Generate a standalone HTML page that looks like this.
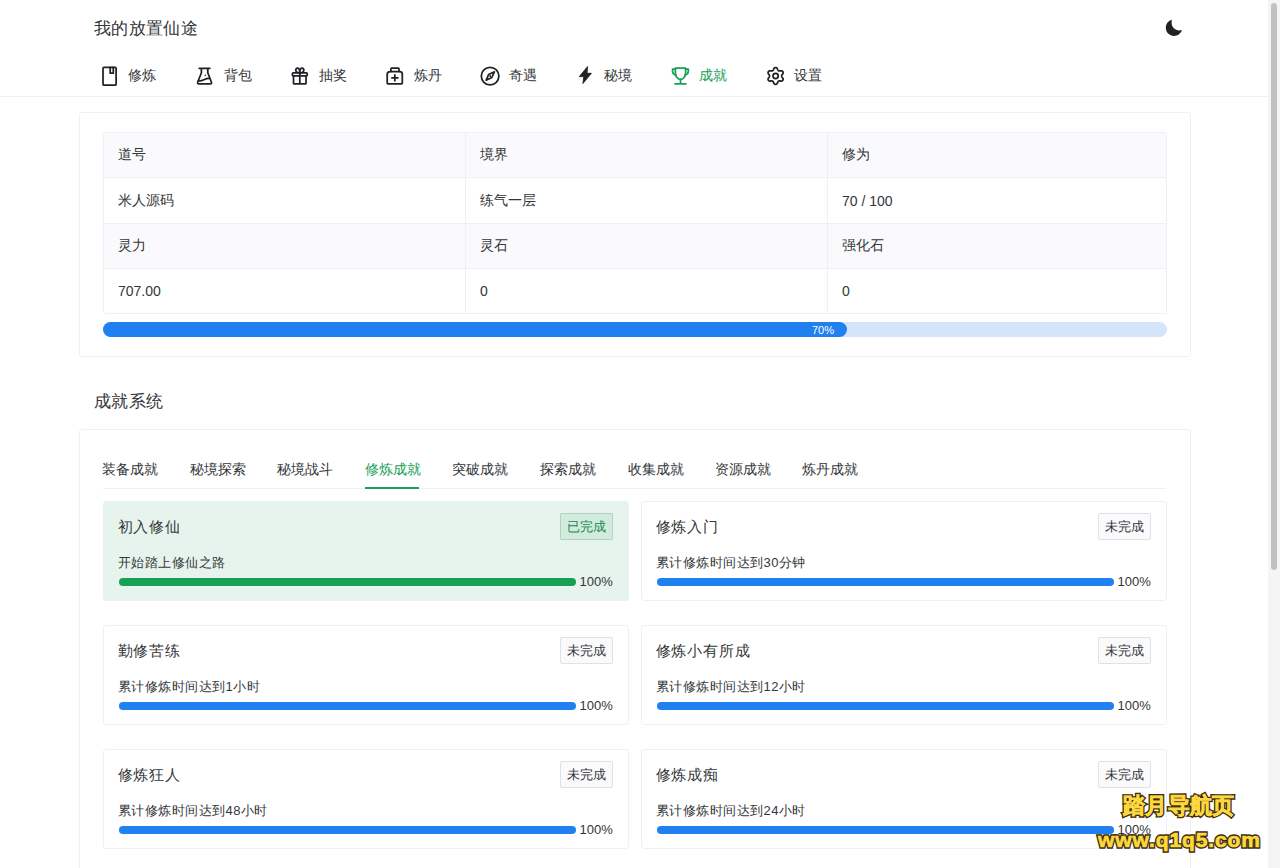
<!DOCTYPE html>
<html><head><meta charset="utf-8">
<style>
*{box-sizing:border-box}
html,body{margin:0;padding:0;background:#fff;width:1280px;height:868px;overflow:hidden}
body{font-family:"Liberation Sans",sans-serif;color:#333639;position:relative}
.abs{position:absolute;white-space:nowrap}
.sb-track{position:absolute;left:1268px;top:0;width:12px;height:868px;background:#f5f5f5}
.sb-thumb{position:absolute;left:1271px;top:3px;width:6px;height:567px;background:#c1c1c1;border-radius:3px}
.hdr-line{position:absolute;left:0;top:96px;width:1268px;height:1px;background:#efeff5}
.title{font-size:17px;letter-spacing:0.35px;line-height:20px;color:#333639}
.nav svg{position:absolute}
.nav .t{position:absolute;font-size:14px;line-height:16px;color:#333639}
.card{position:absolute;border:1px solid #efeff5;border-radius:3px;background:#fff}
table.info{position:absolute;left:103px;top:132px;width:1064px;border-collapse:separate;border-spacing:0;border:1px solid #efeff5;border-radius:3px;font-size:14px}
.info td{height:45px;padding:0 0 0 14px;border-right:1px solid #efeff5;border-bottom:1px solid #efeff5;vertical-align:middle;color:#333639}
.info tr:last-child td{border-bottom:0;height:44px}
.info td:last-child{border-right:0}
.info tr.h td{background:#fafafc}
.bar{position:absolute;border-radius:8px;overflow:hidden}
.tab{position:absolute;top:460px;font-size:14px;line-height:18px;color:#333639}
.ach{position:absolute;width:526px;height:100px;border:1px solid #efeff5;border-radius:3px;background:#fff}
.ach.done{background:#e7f4ed;border-color:#e7f4ed}
.ach .nm{position:absolute;left:13.5px;top:14px;font-size:15px;letter-spacing:0.9px;line-height:22px;color:#333639}
.ach .tag{position:absolute;right:15px;top:11px;width:53px;height:27px;border:1px solid #e0e0e6;background:#fafafc;border-radius:2px;font-size:13px;line-height:25px;text-align:center;color:#333639}
.ach.done .tag{border-color:#acd6bf;background:#d3ebde;color:#138a4c;border-radius:1px}
.ach .ds{position:absolute;left:13.5px;top:52px;font-size:13px;letter-spacing:0.5px;line-height:18px;color:#333639}
.ach .pb{position:absolute;left:14.5px;top:76px;width:457px;height:8px;border-radius:4px;background:#2080f0}
.ach.done .pb{background:#18a058}
.ach .pc{position:absolute;left:475.5px;top:73px;font-size:13px;line-height:14px;color:#333639}
.wm{position:absolute;font-weight:bold;color:#fcd83e;white-space:nowrap}.wm.o{color:#3a2c0c;-webkit-text-stroke:3.4px #3a2c0c}.wm.y{-webkit-text-stroke:0.7px #fcd83e}
</style></head>
<body>
<div class="sb-track"></div><div class="sb-thumb"></div>

<div class="abs title" style="left:94px;top:19px">我的放置仙途</div>
<svg class="abs" style="left:1164px;top:18px" width="20" height="20" viewBox="0 0 24 24"><path fill="#1f2225" d="M9.5 2.2C5.3 3.3 2.2 7.1 2.2 11.6c0 5.5 4.4 9.9 9.9 9.9 4.5 0 8.3-3 9.5-7.1-1 .4-2.1.6-3.3.6-5.1 0-9.2-4.1-9.2-9.2 0-1.2.2-2.5.4-3.6z"/></svg>

<div class="nav">
<svg style="left:98px;top:62px" width="24" height="28" viewBox="0 0 24 28"><g fill="none" stroke="#1f2225" stroke-width="1.75" stroke-linecap="round" stroke-linejoin="round"><rect x="5" y="5.3" width="13.1" height="17.9" rx="1"/><path d="M12.2 5.3V11.2H15.3V5.3"/></g></svg>
<div class="t" style="left:128.4px;top:67px">修炼</div>
<svg style="left:192px;top:62px" width="24" height="28" viewBox="0 0 24 28"><g fill="none" stroke="#1f2225" stroke-width="1.75" stroke-linecap="round" stroke-linejoin="round"><path d="M7.2 6.3H17.8M9.4 6.3V10.8L5.7 20.2Q5.2 21.9 7 21.9H18.2Q19.9 21.9 19.4 20.2L15.8 10.8V6.3"/><path d="M6.5 18.6C9 19.4 11 18.4 12.5 17.6C14 16.8 16 16.2 17.6 16.5"/></g><circle cx="13.3" cy="13.2" r="0.8" fill="#1f2225"/></svg>
<div class="t" style="left:223.5px;top:67px">背包</div>
<svg style="left:288px;top:62px" width="24" height="28" viewBox="0 0 24 28"><g fill="none" stroke="#1f2225" stroke-width="1.75" stroke-linecap="round" stroke-linejoin="round"><rect x="4.4" y="10.9" width="14.8" height="3" rx="0.8"/><path d="M5.5 13.9V21.2Q5.5 21.9 6.2 21.9H17.3Q18 21.9 18 21.2V13.9M11.8 10.9V21.9"/><path d="M11.8 10.9C11.8 8.2 11 6.2 9.6 6.2C8.1 6.2 7.6 7.4 7.8 8.6C8.1 10 10 10.9 11.8 10.9C13.6 10.9 15.5 10 15.8 8.6C16 7.4 15.5 6.2 14 6.2C12.6 6.2 11.8 8.2 11.8 10.9"/></g></svg>
<div class="t" style="left:318.7px;top:67px">抽奖</div>
<svg style="left:383px;top:62px" width="24" height="28" viewBox="0 0 24 28"><g fill="none" stroke="#1f2225" stroke-width="1.75" stroke-linecap="round" stroke-linejoin="round"><path d="M7.9 9.4V6.9Q7.9 6.2 8.6 6.2H15.3Q16 6.2 16 6.9V9.4"/><path d="M7.2 9.6H17Q19.3 9.6 19.3 12.5V21Q19.3 21.9 18.4 21.9H5.1Q4.2 21.9 4.2 21V12.5Q4.2 9.6 7.2 9.6Z"/><path d="M8.9 15.9H14.8M11.85 12.9V18.8"/></g></svg>
<div class="t" style="left:413.8px;top:67px">炼丹</div>
<svg style="left:478px;top:62px" width="24" height="28" viewBox="0 0 24 28"><g fill="none" stroke="#1f2225" stroke-width="1.75" stroke-linecap="round" stroke-linejoin="round"><circle cx="12.1" cy="14.1" r="8.8"/><path d="M16.4 9.8L13.8 15.5L8.2 18.2L10.6 12.5Z"/></g><circle cx="12.2" cy="14" r="0.9" fill="#1f2225"/></svg>
<div class="t" style="left:509.0px;top:67px">奇遇</div>
<svg style="left:573px;top:62px" width="24" height="28" viewBox="0 0 24 28"><path d="M14.6 4.6L6.3 14.6H10.8L9.9 21.5L18.4 11.3H14Z" fill="#1f2225" stroke="#1f2225" stroke-width="0.9" stroke-linejoin="round"/></svg>
<div class="t" style="left:604.1px;top:67px">秘境</div>
<svg style="left:668px;top:62px" width="24" height="28" viewBox="0 0 24 28"><g fill="none" stroke="#18a058" stroke-width="1.75" stroke-linecap="round" stroke-linejoin="round"><path d="M7.4 6.1H17.6V11C17.6 14.6 15.3 17.4 12.5 17.4C9.7 17.4 7.4 14.6 7.4 11Z"/><path d="M7.4 7H4.6V9.4C4.6 11 5.8 12.4 7.8 12.8M17.6 7H20.3V9.4C20.3 11 19.1 12.4 17.1 12.8M12.5 17.4V21.8M7 21.8H18"/></g></svg>
<div class="t" style="left:699.2px;top:67px;color:#18a058">成就</div>
<svg style="left:763px;top:62px" width="24" height="28" viewBox="0 0 24 28"><g fill="none" stroke="#1f2225" stroke-width="1.75" stroke-linecap="round" stroke-linejoin="round"><path d="M18.60 13.95 L18.61 14.11 L18.64 14.27 L18.68 14.43 L18.74 14.60 L18.82 14.77 L18.92 14.95 L19.03 15.14 L19.16 15.34 L19.31 15.56 L19.55 15.81 L19.79 16.08 L19.92 16.33 L20.01 16.57 L20.07 16.82 L20.11 17.06 L20.11 17.29 L20.09 17.52 L20.04 17.74 L19.97 17.95 L19.87 18.15 L19.75 18.33 L19.61 18.50 L19.44 18.65 L19.25 18.78 L19.05 18.90 L18.82 18.99 L18.58 19.06 L18.32 19.10 L18.04 19.11 L17.69 19.04 L17.35 18.96 L17.08 18.93 L16.84 18.92 L16.62 18.92 L16.42 18.93 L16.23 18.95 L16.05 18.98 L15.89 19.02 L15.74 19.08 L15.60 19.15 L15.47 19.23 L15.34 19.34 L15.23 19.46 L15.11 19.59 L15.00 19.75 L14.89 19.92 L14.78 20.11 L14.67 20.32 L14.56 20.57 L14.46 20.90 L14.35 21.24 L14.20 21.48 L14.03 21.68 L13.85 21.86 L13.66 22.01 L13.46 22.13 L13.25 22.22 L13.04 22.29 L12.82 22.34 L12.60 22.35 L12.38 22.34 L12.16 22.29 L11.95 22.22 L11.74 22.13 L11.54 22.01 L11.35 21.86 L11.17 21.68 L11.00 21.48 L10.85 21.24 L10.74 20.90 L10.64 20.57 L10.53 20.32 L10.42 20.11 L10.31 19.92 L10.20 19.75 L10.09 19.59 L9.97 19.46 L9.86 19.34 L9.73 19.23 L9.60 19.15 L9.46 19.08 L9.31 19.02 L9.15 18.98 L8.97 18.95 L8.78 18.93 L8.58 18.92 L8.36 18.92 L8.12 18.93 L7.85 18.96 L7.51 19.04 L7.16 19.11 L6.88 19.10 L6.62 19.06 L6.38 18.99 L6.15 18.90 L5.95 18.78 L5.76 18.65 L5.59 18.50 L5.45 18.33 L5.33 18.15 L5.23 17.95 L5.16 17.74 L5.11 17.52 L5.09 17.29 L5.09 17.06 L5.13 16.82 L5.19 16.57 L5.28 16.33 L5.41 16.08 L5.65 15.81 L5.89 15.56 L6.04 15.34 L6.17 15.14 L6.28 14.95 L6.38 14.77 L6.46 14.60 L6.52 14.43 L6.56 14.27 L6.59 14.11 L6.60 13.95 L6.59 13.79 L6.56 13.63 L6.52 13.47 L6.46 13.30 L6.38 13.13 L6.28 12.95 L6.17 12.76 L6.04 12.56 L5.89 12.34 L5.65 12.09 L5.41 11.82 L5.28 11.57 L5.19 11.33 L5.13 11.08 L5.09 10.84 L5.09 10.61 L5.11 10.38 L5.16 10.16 L5.23 9.95 L5.33 9.75 L5.45 9.57 L5.59 9.40 L5.76 9.25 L5.95 9.12 L6.15 9.00 L6.38 8.91 L6.62 8.84 L6.88 8.80 L7.16 8.79 L7.51 8.86 L7.85 8.94 L8.12 8.97 L8.36 8.98 L8.58 8.98 L8.78 8.97 L8.97 8.95 L9.15 8.92 L9.31 8.88 L9.46 8.82 L9.60 8.75 L9.73 8.67 L9.86 8.56 L9.97 8.44 L10.09 8.31 L10.20 8.15 L10.31 7.98 L10.42 7.79 L10.53 7.58 L10.64 7.33 L10.74 7.00 L10.85 6.66 L11.00 6.42 L11.17 6.22 L11.35 6.04 L11.54 5.89 L11.74 5.77 L11.95 5.68 L12.16 5.61 L12.38 5.56 L12.60 5.55 L12.82 5.56 L13.04 5.61 L13.25 5.68 L13.46 5.77 L13.66 5.89 L13.85 6.04 L14.03 6.22 L14.20 6.42 L14.35 6.66 L14.46 7.00 L14.56 7.33 L14.67 7.58 L14.78 7.79 L14.89 7.98 L15.00 8.15 L15.11 8.31 L15.23 8.44 L15.34 8.56 L15.47 8.67 L15.60 8.75 L15.74 8.82 L15.89 8.88 L16.05 8.92 L16.23 8.95 L16.42 8.97 L16.62 8.98 L16.84 8.98 L17.08 8.97 L17.35 8.94 L17.69 8.86 L18.04 8.79 L18.32 8.80 L18.58 8.84 L18.82 8.91 L19.05 9.00 L19.25 9.12 L19.44 9.25 L19.61 9.40 L19.75 9.57 L19.87 9.75 L19.97 9.95 L20.04 10.16 L20.09 10.38 L20.11 10.61 L20.11 10.84 L20.07 11.08 L20.01 11.33 L19.92 11.57 L19.79 11.82 L19.55 12.09 L19.31 12.34 L19.16 12.56 L19.03 12.76 L18.92 12.95 L18.82 13.13 L18.74 13.30 L18.68 13.47 L18.64 13.63 L18.61 13.79Z"/><circle cx="12.6" cy="13.95" r="2.6"/></g></svg>
<div class="t" style="left:794.4px;top:67px">设置</div>
</div>
<div class="hdr-line"></div>

<div class="card" style="left:79px;top:112px;width:1112px;height:245px"></div>
<table class="info">
<tr class="h"><td style="width:362px">道号</td><td style="width:362px">境界</td><td>修为</td></tr>
<tr style="height:46px"><td style="height:46px">米人源码</td><td>练气一层</td><td>70 / 100</td></tr>
<tr class="h"><td>灵力</td><td>灵石</td><td>强化石</td></tr>
<tr><td>707.00</td><td>0</td><td>0</td></tr>
</table>
<div class="bar" style="left:103px;top:322px;width:1064px;height:15px;background:#d2e5fb"></div>
<div class="bar" style="left:103px;top:322px;width:744px;height:15px;background:#2080f0"></div>
<div class="abs" style="left:812px;top:323.5px;font-size:11px;line-height:13px;color:#fff">70%</div>

<div class="abs title" style="left:94px;top:391.5px">成就系统</div>

<div class="card" style="left:79px;top:429px;width:1112px;height:500px"></div>
<div class="abs" style="left:103px;top:488px;width:1063px;height:1px;background:#efeff5"></div>
<div class="tab" style="left:102px">装备成就</div>
<div class="tab" style="left:190px">秘境探索</div>
<div class="tab" style="left:277px">秘境战斗</div>
<div class="tab" style="left:365px;color:#18a058">修炼成就</div>
<div class="tab" style="left:452px">突破成就</div>
<div class="tab" style="left:540px">探索成就</div>
<div class="tab" style="left:628px">收集成就</div>
<div class="tab" style="left:715px">资源成就</div>
<div class="tab" style="left:802px">炼丹成就</div>
<div class="abs" style="left:365px;top:487px;width:54px;height:2px;background:#18a058"></div>

<div class="ach done" style="left:103px;top:501px"><div class="nm">初入修仙</div><div class="tag">已完成</div><div class="ds">开始踏上修仙之路</div><div class="pb"></div><div class="pc">100%</div></div>
<div class="ach" style="left:641px;top:501px"><div class="nm">修炼入门</div><div class="tag">未完成</div><div class="ds">累计修炼时间达到30分钟</div><div class="pb"></div><div class="pc">100%</div></div>
<div class="ach" style="left:103px;top:625px"><div class="nm">勤修苦练</div><div class="tag">未完成</div><div class="ds">累计修炼时间达到1小时</div><div class="pb"></div><div class="pc">100%</div></div>
<div class="ach" style="left:641px;top:625px"><div class="nm">修炼小有所成</div><div class="tag">未完成</div><div class="ds">累计修炼时间达到12小时</div><div class="pb"></div><div class="pc">100%</div></div>
<div class="ach" style="left:103px;top:749px"><div class="nm">修炼狂人</div><div class="tag">未完成</div><div class="ds">累计修炼时间达到48小时</div><div class="pb"></div><div class="pc">100%</div></div>
<div class="ach" style="left:641px;top:749px"><div class="nm">修炼成痴</div><div class="tag">未完成</div><div class="ds">累计修炼时间达到24小时</div><div class="pb"></div><div class="pc">100%</div></div>

<div class="wm o" style="left:1123px;top:792px;font-size:22px;line-height:28px;letter-spacing:0.3px">踏月导航页</div><div class="wm y" style="left:1123px;top:792px;font-size:22px;line-height:28px;letter-spacing:0.3px">踏月导航页</div>
<div class="wm o" style="left:1098px;top:827px;font-size:21px;line-height:26px;letter-spacing:0.9px">www.q1q5.com</div><div class="wm y" style="left:1098px;top:827px;font-size:21px;line-height:26px;letter-spacing:0.9px">www.q1q5.com</div>
</body></html>
